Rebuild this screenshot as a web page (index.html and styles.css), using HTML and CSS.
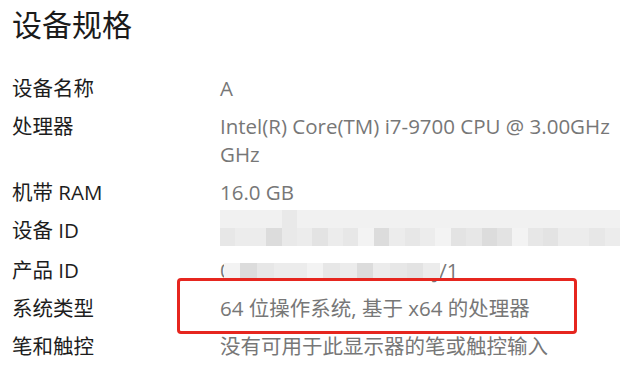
FILE: index.html
```
<!DOCTYPE html>
<html lang="zh-CN">
<head>
  <meta charset="UTF-8">
  <title>设备规格</title>
  <link rel="stylesheet" href="styles.css">
</head>
<body>
  <div class="specs">
    <h1 class="title">设备规格</h1>
    <div class="rows">
      <div class="row">
        <div class="label">设备名称</div>
        <div class="value">A</div>
      </div>
      <div class="row">
        <div class="label">处理器</div>
        <div class="value">Intel(R) Core(TM) i7-9700 CPU @ 3.00GHz GHz</div>
      </div>
      <div class="row">
        <div class="label">机带 RAM</div>
        <div class="value">16.0 GB</div>
      </div>
      <div class="row">
        <div class="label">设备 ID</div>
        <div class="value">
          <div class="mosaic mosaic-id">
            <i></i><i></i><i></i><i></i><i></i><i></i><i></i><i></i><i></i><i></i><i></i><i></i><i></i>
            <i></i><i></i><i></i><i></i><i></i><i></i><i></i><i></i><i></i><i></i><i></i><i></i><i></i>
            <i></i><i></i><i></i><i></i><i></i><i></i><i></i><i></i><i></i><i></i><i></i><i></i><i></i>
            <i></i><i></i><i></i><i></i><i></i><i></i><i></i><i></i><i></i><i></i><i></i><i></i><i></i>
          </div>
        </div>
      </div>
      <div class="row">
        <div class="label">产品 ID</div>
        <div class="value product">
          <span>0</span>
          <div class="mosaic mosaic-prod">
            <i></i><i></i><i></i><i></i><i></i><i></i><i></i><i></i><i></i><i></i><i></i><i></i><i></i>
          </div>
          <span>J/1</span>
        </div>
      </div>
      <div class="row">
        <div class="label">系统类型</div>
        <div class="value marked">64 位操作系统, 基于 x64 的处理器</div>
      </div>
      <div class="row">
        <div class="label">笔和触控</div>
        <div class="value">没有可用于此显示器的笔或触控输入</div>
      </div>
    </div>
  </div>
</body>
</html>
```

FILE: styles.css
```
* {
  box-sizing: border-box;
}
body {
  margin: 0;
  padding: 0;
  background: #fff;
  font-family: "Open Sans", "Noto Sans CJK SC", sans-serif;
}
.specs {
  padding: 5px 0 0 12px;
}
.title {
  margin: 0 0 29px;
  font-size: 30px;
  line-height: 40px;
  font-weight: 400;
  color: #1b1b1b;
}
.rows {
  display: flex;
  flex-direction: column;
  gap: 10px;
}
.row {
  display: grid;
  grid-template-columns: 208px 395px;
  font-size: 20.5px;
  line-height: 28px;
}
.label {
  color: #1d1d1d;
}
.value {
  color: #777;
}
.mosaic {
  display: grid;
  grid-auto-rows: 1fr;
  filter: blur(0.6px);
}
.mosaic i {
  background: #ececec;
}
.mosaic i:nth-child(3n) { background: #e3e3e3; }
.mosaic i:nth-child(5n+1) { background: #f3f3f3; }
.mosaic i:nth-child(7n+2) { background: #dcdcdc; }
.mosaic i:nth-child(4n+3) { background: #e7e7e7; }
.mosaic-id {
  width: 400px;
  height: 36px;
  margin-top: -6px;
  grid-template-columns: repeat(26, 1fr);
}
.mosaic-id i:nth-child(-n+26) { background: #f1f1f1; }
.mosaic-id i:nth-child(26n+5) { background: #e9e9e9; }
.product {
  display: flex;
  align-items: center;
}
.mosaic-prod {
  width: 216px;
  height: 18px;
  margin: 4px -6px 0 -8px;
  grid-template-columns: repeat(13, 1fr);
}
.marked {
  position: relative;
}
.marked::before {
  content: "";
  position: absolute;
  left: -43px;
  top: -16px;
  width: 394px;
  height: 50px;
  border: 3px solid #e6261f;
  border-radius: 4px;
}
```
